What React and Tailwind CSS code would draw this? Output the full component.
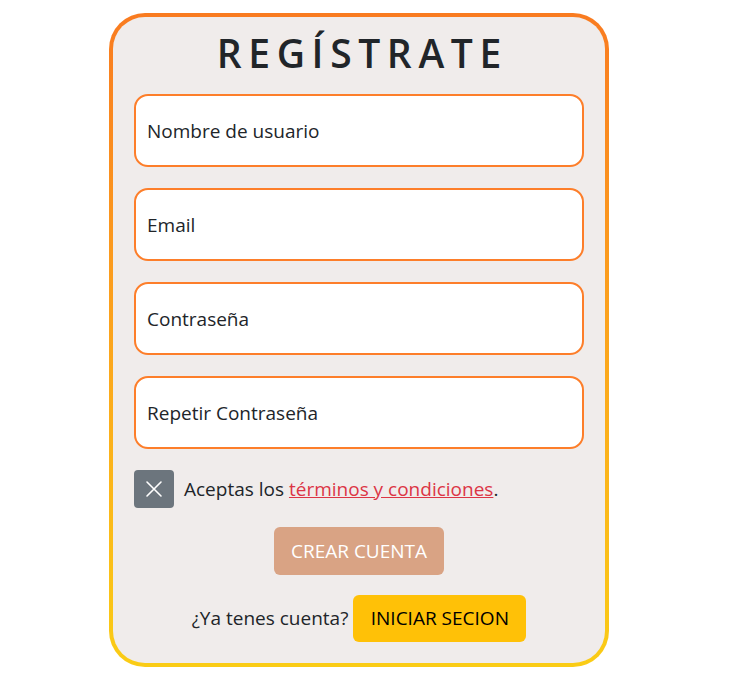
export default function App() {
  const fields = ['Nombre de usuario', 'Email', 'Contraseña', 'Repetir Contraseña'];

  return (
    <div className="min-h-screen bg-white flex pt-[13px] pl-[109px] font-['Open_Sans',sans-serif] text-[#212529]">
      {/* gradient border wrapper */}
      <div className="w-[500px] h-[654px] rounded-[36px] p-[4px] bg-gradient-to-b from-[#f97b20] to-[#facc15]">
        <div className="h-full rounded-[32px] bg-[#f0eceb] px-[21px] flex flex-col">
          <h1 className="text-center text-[39px] font-semibold tracking-[0.17em] pl-[0.17em] leading-none mt-[16px] mb-[22px] text-[#212529]">
            REGÍSTRATE
          </h1>

          <div className="flex flex-col gap-[21px]">
            {fields.map(f => (
              <input
                key={f}
                type="text"
                placeholder={f}
                className="h-[73px] w-full rounded-[14px] border-2 border-[#fd7e2a] bg-white px-[11px] text-[19px] placeholder:text-[#212529] outline-none"
              />
            ))}
          </div>

          <div className="flex items-center gap-[10px] mt-[21px]">
            <div className="w-[40px] h-[38px] rounded-[4px] bg-[#6c757d] flex items-center justify-center">
              <svg width="18" height="18" viewBox="0 0 18 18" fill="none" stroke="white" strokeWidth="1.6" strokeLinecap="round">
                <path d="M2 2 L16 16 M16 2 L2 16" />
              </svg>
            </div>
            <span className="text-[19px]">
              Aceptas los <a href="#" className="text-[#dc3545] underline">términos y condiciones</a>.
            </span>
          </div>

          <div className="flex justify-center mt-[19px]">
            <button className="w-[170px] h-[48px] rounded-[6px] bg-[#d9a384] text-white text-[19px]">
              CREAR CUENTA
            </button>
          </div>

          <div className="flex justify-center items-center gap-[5px] mt-[20px]">
            <span className="text-[19px]">¿Ya tenes cuenta?</span>
            <button className="w-[173px] h-[47px] rounded-[6px] bg-[#ffc107] text-black text-[19px]">
              INICIAR SECION
            </button>
          </div>
        </div>
      </div>
    </div>
  );
}
